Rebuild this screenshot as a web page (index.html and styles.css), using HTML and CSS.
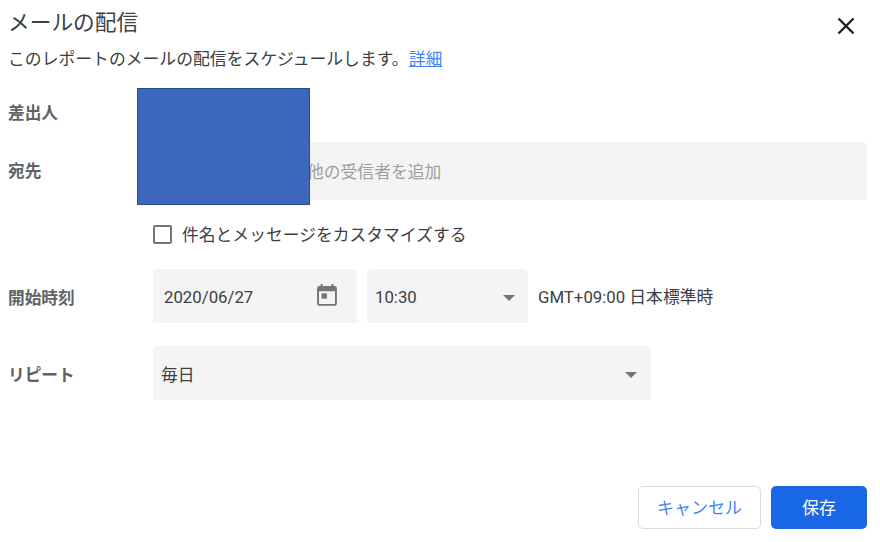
FILE: index.html
```
<!DOCTYPE html>
<html lang="ja">
<head>
  <meta charset="UTF-8">
  <title>メールの配信</title>
  <link rel="stylesheet" href="styles.css">
</head>
<body>
  <div class="dialog">
    <div class="header">
      <h2>メールの配信</h2>
      <button class="close" aria-label="閉じる">
        <svg width="18" height="18" viewBox="0 0 18 18"><path d="M1.5 1.5L16.5 16.5M16.5 1.5L1.5 16.5" stroke="#202124" stroke-width="2.4" fill="none"/></svg>
      </button>
    </div>
    <p class="desc">このレポートのメールの配信をスケジュールします。<a href="#">詳細</a></p>

    <div class="row from">
      <div class="label">差出人</div>
      <div class="mask"></div>
    </div>

    <div class="row to">
      <div class="label">宛先</div>
      <div class="field recipients">他の受信者を追加</div>
    </div>

    <div class="row custom">
      <div class="label"></div>
      <span class="checkbox"></span>
      <span class="check-text">件名とメッセージをカスタマイズする</span>
    </div>

    <div class="row start">
      <div class="label">開始時刻</div>
      <div class="field date">
        <span>2020/06/27</span>
        <svg width="20" height="22" viewBox="0 0 20 22" fill="#757575"><path fill-rule="evenodd" d="M3.6 0h2v2.1h8.8V0h2v2.1h1.3a2.2 2.2 0 0 1 2.200 2.200v15.300a2.200 2.200 0 0 1-2.200 2.200H2.300A2.200 2.200 0 0 1 .1 19.600V4.300a2.200 2.200 0 0 1 2.200-2.200h1.300zM2 7.200v12c0 .4.300.7.700.7h14.600c.4 0 .7-.3.700-.7v-12z"/><path d="M4.500 9.300h5.400v5.400H4.500z"/></svg>
      </div>
      <div class="field time">
        <span>10:30</span>
        <span class="arrow"></span>
      </div>
      <span class="zone">GMT+09:00 日本標準時</span>
    </div>

    <div class="row repeat">
      <div class="label">リピート</div>
      <div class="field select">
        <span>毎日</span>
        <span class="arrow"></span>
      </div>
    </div>

    <div class="actions">
      <button class="btn cancel">キャンセル</button>
      <button class="btn save">保存</button>
    </div>
  </div>
</body>
</html>
```

FILE: styles.css
```
* { box-sizing: border-box; }
body {
  margin: 0;
  background: #fff;
  font-family: Roboto, "Noto Sans CJK JP", sans-serif;
  font-size: 16.8px;
  color: #3c4043;
}
.dialog {
  height: 542px;
  padding: 8px 13px 13px 8px;
  display: flex;
  flex-direction: column;
}
.header {
  display: flex;
  justify-content: space-between;
  height: 30px;
}
h2 {
  margin: 0;
  font-size: 21.7px;
  font-weight: 400;
  line-height: 30px;
}
.close {
  width: 18px;
  height: 18px;
  margin: 9px 12px 0 0;
  padding: 0;
  border: none;
  background: none;
  cursor: pointer;
}
.close svg {
  display: block;
}
.desc {
  margin: 9px 0 0;
  font-size: 16.82px;
  line-height: 24px;
}
.desc a {
  color: #4285f4;
}
.row {
  display: flex;
  align-items: center;
  flex-shrink: 0;
}
.label {
  width: 145px;
  padding-top: 3px;
  font-size: 16.7px;
  font-weight: 600;
  line-height: 24px;
  color: #5f6368;
}
.field {
  display: flex;
  align-items: center;
  height: 54px;
  background: #f4f4f4;
  border-radius: 5px 5px 0 0;
}
.from {
  position: relative;
  height: 24px;
  margin-top: 29px;
}
/* hides the addresses */
.mask {
  position: absolute;
  left: 129px;
  top: -12px;
  width: 173px;
  height: 117px;
  background: #3b68bd;
  border: 1px solid #2b4a84;
  z-index: 1;
}
.to {
  height: 58px;
  margin-top: 18px;
}
.to .label {
  padding-top: 1px;
}
.recipients {
  flex: 1;
  height: 58px;
  padding-left: 154px;
  color: #9e9e9e;
}
.custom {
  height: 24px;
  margin-top: 22px;
}
.checkbox {
  width: 19px;
  height: 19px;
  margin-right: 10px;
  border: 2px solid #757575;
  border-radius: 2px;
}
.start {
  margin-top: 23px;
}
.start .label,
.repeat .label {
  padding-top: 5px;
}
.date {
  width: 204px;
  justify-content: space-between;
  padding: 2px 20px 0 11px;
}
.date svg {
  margin-top: -5px;
}
.time {
  width: 161px;
  margin: 0 10px;
  justify-content: space-between;
  padding: 2px 13px 0 8px;
}
.arrow {
  border: 6px solid transparent;
  border-top-color: #757575;
  border-bottom: none;
  margin-top: 2px;
}
.repeat {
  margin-top: 23px;
}
.select {
  width: 498px;
  justify-content: space-between;
  padding: 2px 14px 0 8px;
}
.zone {
  margin-top: -1px;
}
.actions {
  display: flex;
  justify-content: flex-end;
  gap: 10px;
  margin-top: auto;
}
.btn {
  height: 43px;
  padding: 0 0 2px;
  border-radius: 5px;
  font-family: inherit;
  font-size: 17px;
  cursor: pointer;
}
.cancel {
  width: 123px;
  background: #fff;
  border: 1px solid #dadce0;
  color: #4285f4;
}
.save {
  width: 96px;
  background: #1967e4;
  border: none;
  color: #fff;
}
```
